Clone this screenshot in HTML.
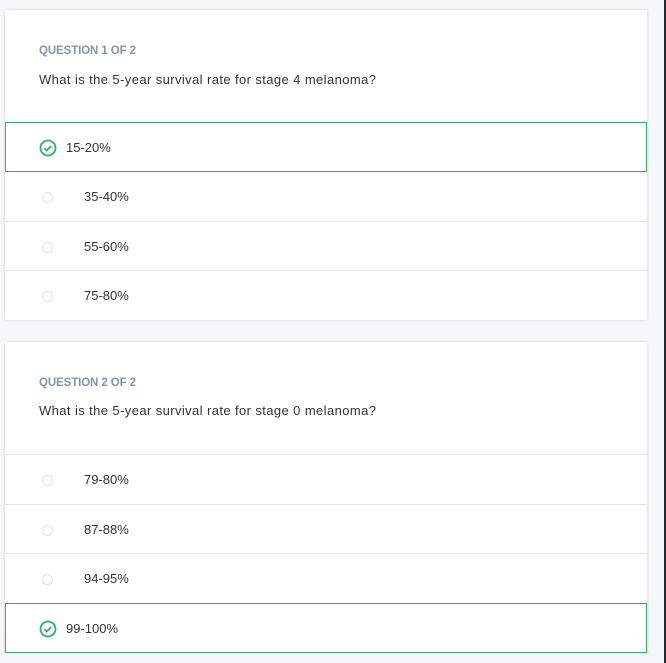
<!DOCTYPE html>
<html><head><style>
body{margin:0;width:666px;height:663px;background:#f6f7f9;position:relative;overflow:hidden;font-family:"Liberation Sans",sans-serif;}
.strip{position:absolute;right:0;top:0;width:2px;height:663px;background:#1f2a33}
.card{position:absolute;left:5px;width:642px;background:#fff;box-shadow:0 0 3px rgba(0,0,0,.15);}
.lbl{position:absolute;left:34px;font-size:11.5px;font-weight:bold;color:#8795a1;letter-spacing:-0.1px}
.q{position:absolute;left:34px;font-size:13px;color:#333;letter-spacing:0.4px}
.row{position:absolute;left:0;width:642px;height:49px;border-top:1px solid #e4e4e4;box-sizing:border-box;}
.row .r{position:absolute;left:37px;top:20px;width:9px;height:9px;border:1px solid #e2e2e2;border-radius:50%;}
.row .t{position:absolute;left:79px;top:17px;font-size:13px;color:#333;}
.sel{position:absolute;left:0;width:642px;height:50px;border:1px solid #3aaa6b;box-sizing:border-box;}
.sel svg{position:absolute;left:33px;top:16px}
.sel .t{position:absolute;left:60px;top:17px;font-size:13px;color:#333;}
</style></head><body>
<div class="strip"></div>
<div class="card" style="top:10px;height:310px">
 <div class="lbl" style="top:35px">QUESTION 1 OF 2</div>
 <div class="q" style="top:62px">What is the 5-year survival rate for stage 4 melanoma?</div>
 <div class="sel" style="top:112px"><svg width="18" height="18" viewBox="0 0 18 18"><circle cx="9" cy="9" r="7.5" fill="none" stroke="#2fb06a" stroke-width="1.8"/><path d="M5.5 9.2l2.3 2.3 4.5-4.6" fill="none" stroke="#2fb06a" stroke-width="1.8"/></svg><div class="t">15-20%</div></div>
 <div class="row" style="top:162px;border-top:none"><div class="r"></div><div class="t">35-40%</div></div>
 <div class="row" style="top:211px"><div class="r"></div><div class="t">55-60%</div></div>
 <div class="row" style="top:260px"><div class="r"></div><div class="t">75-80%</div></div>
</div>
<div class="card" style="top:342px;height:310px">
 <div class="lbl" style="top:35px">QUESTION 2 OF 2</div>
 <div class="q" style="top:61px">What is the 5-year survival rate for stage 0 melanoma?</div>
 <div class="row" style="top:112px"><div class="r"></div><div class="t">79-80%</div></div>
 <div class="row" style="top:162px"><div class="r"></div><div class="t">87-88%</div></div>
 <div class="row" style="top:211px"><div class="r"></div><div class="t">94-95%</div></div>
 <div class="sel" style="top:261px"><svg width="18" height="18" viewBox="0 0 18 18"><circle cx="9" cy="9" r="7.5" fill="none" stroke="#2fb06a" stroke-width="1.8"/><path d="M5.5 9.2l2.3 2.3 4.5-4.6" fill="none" stroke="#2fb06a" stroke-width="1.8"/></svg><div class="t">99-100%</div></div>
</div>
</body></html>
